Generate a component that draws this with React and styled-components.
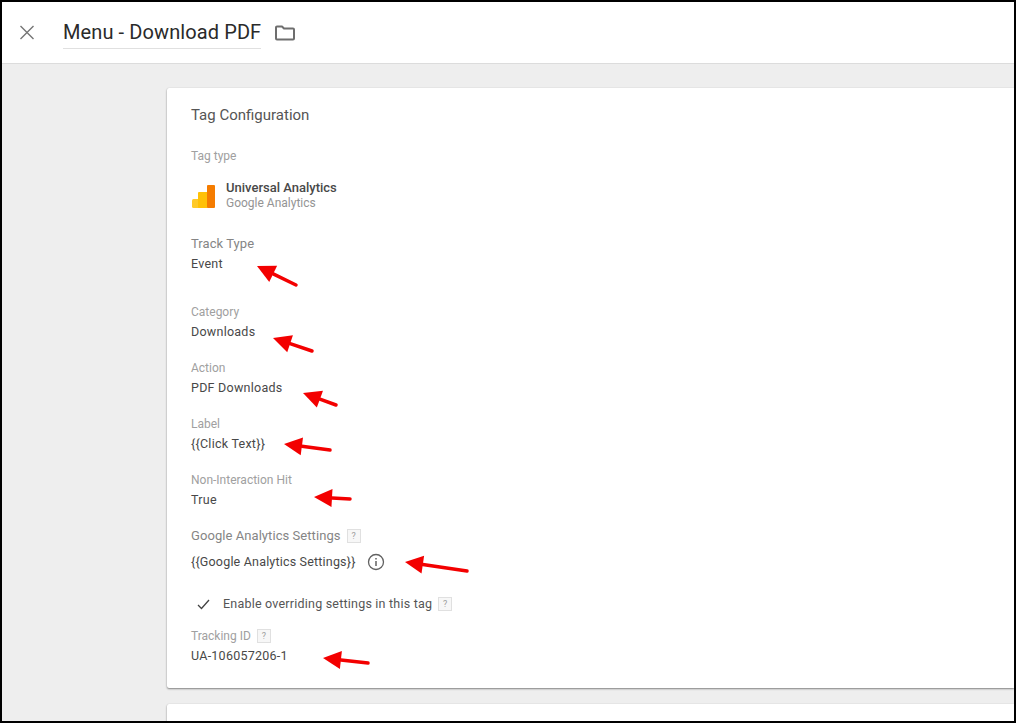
import React from "react";
import styled, { createGlobalStyle } from "styled-components";

const Global = createGlobalStyle`
  html, body { margin: 0; padding: 0; background: #fff; }
  body { font-family: Roboto, "Liberation Sans", sans-serif; }
`;

const Frame = styled.div`
  position: relative;
  box-sizing: border-box;
  width: 1016px;
  height: 723px;
  border: 2px solid #000;
  overflow: hidden;
  display: flex;
  flex-direction: column;
  background: #eeeeee;
`;

const Header = styled.header`
  flex: none;
  box-sizing: border-box;
  height: 62px;
  background: #fff;
  border-bottom: 1px solid #dcdcdc;
  display: flex;
  align-items: center;
  padding-left: 17px;
`;

const CloseButton = styled.button`
  all: unset;
  width: 16px;
  height: 16px;
  display: flex;
  color: #757575;
  margin-right: 28px;
`;

const Title = styled.div`
  font-size: 20px;
  line-height: 30px;
  color: #2a2a2a;
  border-bottom: 1px solid #e0e0e0;
  padding-bottom: 1px;
  margin-top: 1px;
  margin-right: 14px;
  width: 198px;
  white-space: nowrap;
  letter-spacing: 0.1px;
`;

const FolderIcon = styled.svg`
  width: 20px;
  height: 16px;
  color: #6e6e6e;
`;

const Main = styled.main`
  flex: 1;
  min-height: 0;
  padding: 24px 0 0 165px;
  display: flex;
  flex-direction: column;
  gap: 16px;
`;

const Card = styled.section`
  flex: none;
  background: #fff;
  border-radius: 2px 0 0 2px;
  box-shadow: 0 1px 2px rgba(0, 0, 0, 0.45), 0 0 1px rgba(0, 0, 0, 0.15);
  box-sizing: border-box;
  height: ${(p) => p.$height}px;
  padding: ${(p) => (p.$height > 100 ? "17px 24px 0" : "0")};
`;

const CardTitle = styled.h2`
  margin: 0 0 23px;
  font-size: 15px;
  line-height: 20px;
  font-weight: 400;
  color: #555;
`;

const Label = styled.div`
  display: flex;
  align-items: center;
  gap: 6px;
  font-size: ${(p) => (p.$strong ? "13px" : "12px")};
  line-height: 16px;
  color: ${(p) => (p.$strong ? "#858585" : "#a0a0a0")};
  font-weight: 400;
  letter-spacing: ${(p) => (p.$strong ? "0.005em" : "0")};
`;

const Value = styled.div`
  font-size: 12.5px;
  line-height: 16px;
  color: #484848;
  margin-top: 4px;
  letter-spacing: 0.02em;
`;

const Field = styled.div`
  height: ${(p) => p.$height}px;
`;

const TagType = styled.div`
  display: flex;
  align-items: center;
  gap: 12px;
  margin: 16px 0 24px;
  height: 32px;
`;

const TagIcon = styled.svg`
  width: 23px;
  height: 23px;
  flex: none;
  margin-left: 1px;
  margin-right: -1px;
`;

const TagText = styled.div`
  padding-bottom: 1px;
`;

const TagName = styled.div`
  font-size: 13px;
  line-height: 16px;
  font-weight: 500;
  color: #484848;
`;

const TagVendor = styled.div`
  font-size: 12px;
  line-height: 15px;
  color: #949494;
`;

const Help = styled.span`
  box-sizing: border-box;
  width: 14px;
  height: 14px;
  display: inline-flex;
  align-items: center;
  justify-content: center;
  border: 1px solid #e0e0e0;
  background: #f7f7f7;
  color: #9e9e9e;
  font-size: 9px;
  line-height: 1;
`;

const ValueRow = styled.div`
  display: flex;
  align-items: center;
  gap: 11px;
  font-size: 12.5px;
  line-height: 16px;
  color: #484848;
  margin-top: 9px;
  letter-spacing: 0.015em;
`;

const InfoIcon = styled.svg`
  width: 18px;
  height: 18px;
  color: #616161;
`;

const CheckRow = styled.div`
  display: flex;
  align-items: center;
  font-size: 12.5px;
  line-height: 16px;
  color: #555;
  padding-left: 6px;
  letter-spacing: 0.017em;
`;

const CheckIcon = styled.svg`
  width: 13px;
  height: 11px;
  margin-right: 13px;
  color: #424242;
`;

const CheckText = styled.span`
  margin-right: 6px;
`;

const Arrows = styled.svg`
  position: absolute;
  left: -2px;
  top: -2px;
  width: 1016px;
  height: 723px;
  pointer-events: none;
`;

const arrows = [
  [257, 266, 296, 285],
  [273, 338, 312, 351],
  [303, 393, 336, 405],
  [284, 444, 330, 450],
  [314, 497, 350, 499],
  [405, 562, 467, 571],
  [323, 658, 368, 663],
];

function Arrow({ d }) {
  const [x1, y1, x2, y2] = d;
  const len = Math.hypot(x2 - x1, y2 - y1);
  const ux = (x2 - x1) / len;
  const uy = (y2 - y1) / len;
  const head = 18;
  const half = 9;
  const bx = x1 + ux * head;
  const by = y1 + uy * head;
  const points = `${x1},${y1} ${bx - uy * half},${by + ux * half} ${bx + uy * half},${by - ux * half}`;
  return (
    <g>
      <line x1={bx} y1={by} x2={x2} y2={y2} stroke="#f30000" strokeWidth="3.5" strokeLinecap="round" />
      <polygon points={points} fill="#f30000" />
    </g>
  );
}

export default function App() {
  return (
    <>
      <Global />
      <Frame>
        <Header>
          <CloseButton aria-label="Close">
            <svg viewBox="0 0 16 16" width="16" height="16" fill="none" stroke="currentColor" strokeWidth="1.4">
              <path d="M1.5 1l13 13M14.5 1l-13 13" />
            </svg>
          </CloseButton>
          <Title>Menu - Download PDF</Title>
          <FolderIcon viewBox="0 0 20 16" fill="none" stroke="currentColor" strokeWidth="2">
            <path d="M1 2.5a1 1 0 0 1 1-1h5l2 2h9a1 1 0 0 1 1 1v9a1 1 0 0 1-1 1H2a1 1 0 0 1-1-1z" strokeLinejoin="round" />
          </FolderIcon>
        </Header>
        <Main>
          <Card $height={600}>
            <CardTitle>Tag Configuration</CardTitle>
            <Label>Tag type</Label>
            <TagType>
              <TagIcon viewBox="0 0 23 23">
                <rect x="0" y="14" width="9" height="9" rx="1.5" fill="#ffca28" />
                <rect x="6" y="7" width="10" height="16" rx="1" fill="#ffc107" />
                <rect x="15" y="0" width="8" height="23" rx="1" fill="#f57c00" />
              </TagIcon>
              <TagText>
                <TagName>Universal Analytics</TagName>
                <TagVendor>Google Analytics</TagVendor>
              </TagText>
            </TagType>
            <Field $height={68}>
              <Label $strong>Track Type</Label>
              <Value>Event</Value>
            </Field>
            <Field $height={56}>
              <Label>Category</Label>
              <Value>Downloads</Value>
            </Field>
            <Field $height={56}>
              <Label>Action</Label>
              <Value>PDF Downloads</Value>
            </Field>
            <Field $height={56}>
              <Label>Label</Label>
              <Value>{"{{Click Text}}"}</Value>
            </Field>
            <Field $height={56}>
              <Label>Non-Interaction Hit</Label>
              <Value>True</Value>
            </Field>
            <Field $height={68}>
              <Label $strong>
                Google Analytics Settings <Help>?</Help>
              </Label>
              <ValueRow>
                {"{{Google Analytics Settings}}"}
                <InfoIcon viewBox="0 0 18 18" fill="none" stroke="currentColor" strokeWidth="1.3">
                  <circle cx="9" cy="9" r="7.5" />
                  <path d="M9 8v5" strokeWidth="1.5" />
                  <path d="M9 5v1.6" strokeWidth="1.5" />
                </InfoIcon>
              </ValueRow>
            </Field>
            <Field $height={32}>
              <CheckRow>
                <CheckIcon viewBox="0 0 13 11" fill="none" stroke="currentColor" strokeWidth="1.3">
                  <path d="M1 6l3.5 3.5L12 1" />
                </CheckIcon>
                <CheckText>Enable overriding settings in this tag</CheckText>
                <Help>?</Help>
              </CheckRow>
            </Field>
            <Field $height={40}>
              <Label>
                Tracking ID <Help>?</Help>
              </Label>
              <Value>UA-106057206-1</Value>
            </Field>
          </Card>
          <Card $height={40} />
        </Main>
        <Arrows viewBox="0 0 1016 723">
          {arrows.map((d) => (
            <Arrow key={d.join()} d={d} />
          ))}
        </Arrows>
      </Frame>
    </>
  );
}
